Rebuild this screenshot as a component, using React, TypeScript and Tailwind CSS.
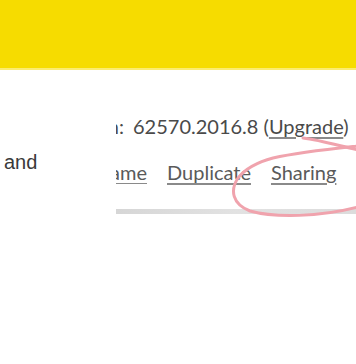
import React from "react";

export default function App() {
  return (
    <div className="relative w-[356px] h-[364px] overflow-hidden bg-white">
      <div className="h-[68px] bg-[#f6dc00]" />
      <div className="h-[2px] bg-[#fbec70]" />
      <div className="flex">
        <div className="w-[116px] shrink-0 pl-[4px] pt-[80px] text-[20px] leading-[24px] text-[#3a3a3a] font-['Liberation_Sans',Arial,sans-serif]">
          and
        </div>
        <div className="flex-1 min-w-0 flex flex-col font-['Lato','Noto_Sans',sans-serif]">
          <div className="flex items-baseline pt-[43px] text-[20px] leading-[26px] text-[#4a4a4a] whitespace-nowrap">
            <div className="w-[8px] flex justify-end overflow-hidden shrink-0">
              <span>Version:</span>
            </div>
            <span className="ml-[9px]">62570.2016.8 (<span className="underline underline-offset-[3px] decoration-[#8a8a8a]">Upgrade</span>)</span>
          </div>
          <div className="flex items-baseline mt-[21px] text-[20px] leading-[24px] text-[#5a5a5a] whitespace-nowrap gap-[20px]">
            <div className="w-[31px] flex justify-end overflow-hidden shrink-0">
              <span className="underline underline-offset-[3px] decoration-[#8a8a8a]">Rename</span>
            </div>
            <span className="underline underline-offset-[3px] decoration-[#8a8a8a]">Duplicate</span>
            <span className="underline underline-offset-[3px] decoration-[#8a8a8a]">Sharing</span>
          </div>
          <div className="mt-[25px] h-[5px] bg-gradient-to-r from-[#d6d6d6] via-[#e2e2e2] to-[#dcdcdc]" />
        </div>
      </div>
      <svg className="absolute left-0 top-0 pointer-events-none" width="356" height="364" viewBox="0 0 356 364" fill="none">
        <path
          d="M303 138 C320 140 340 146 358 150"
          stroke="#f0a3ad"
          strokeWidth="3"
          strokeLinecap="round"
        />
        <path
          d="M358 146 C330 149 300 152 273 158 C258 162 246 168 238 178 C230 190 232 204 250 211 C275 218 320 217 358 207"
          stroke="#f0a3ad"
          strokeWidth="3"
          strokeLinecap="round"
        />
      </svg>
    </div>
  );
}
